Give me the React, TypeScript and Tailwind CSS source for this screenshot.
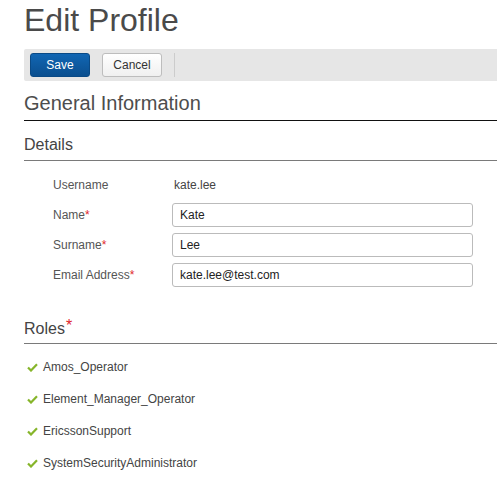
import React from 'react';

const font = { fontFamily: '"Liberation Sans", Arial, sans-serif' };

const Req = () => <span className="text-[#e0282d]">*</span>;

const CheckIcon = () => (
  <svg width="11" height="9" viewBox="0 0 11 9" className="shrink-0">
    <path d="M1 4.5 L4 7.5 L10 1.2" fill="none" stroke="#86b52a" strokeWidth="2.2" />
  </svg>
);

const fields = [
  { label: 'Name', value: 'Kate' },
  { label: 'Surname', value: 'Lee' },
  { label: 'Email Address', value: 'kate.lee@test.com' },
];

const roles = [
  'Amos_Operator',
  'Element_Manager_Operator',
  'EricssonSupport',
  'SystemSecurityAdministrator',
];

export default function App() {
  return (
    <div className="w-[497px] h-[487px] bg-white overflow-hidden pl-[24px]" style={font}>
      <h1 className="pt-[4px] text-[32px] leading-[32px] text-[#4a4a4a]">Edit Profile</h1>

      {/* toolbar */}
      <div className="mt-[13px] h-[32px] bg-[#e6e6e6] rounded-l-[2px] flex items-center px-[6px] gap-[12px]">
        <button className="w-[60px] h-[24px] rounded-[3px] border border-[#0a4a86] bg-gradient-to-b from-[#1166b3] to-[#0b4f8f] text-white text-[12px]">
          Save
        </button>
        <button className="w-[60px] h-[24px] rounded-[3px] border border-[#bdbdbd] bg-gradient-to-b from-white to-[#f0f0f0] text-[#333] text-[12px]">
          Cancel
        </button>
        <div className="w-px h-[24px] bg-[#cccccc]" />
      </div>

      <h2 className="mt-[12px] pb-[7px] border-b border-[#111] text-[20px] leading-[20px] text-[#4d4d4d]">
        General Information
      </h2>

      <h3 className="mt-[16px] pb-[7px] border-b border-[#7a7a7a] text-[16px] leading-[16px] text-[#444]">
        Details
      </h3>

      <div className="mt-[12px] pl-[29px] flex flex-col gap-[6px] text-[12px]">
        <div className="flex items-center h-[24px]">
          <div className="w-[120px] text-[#555]">Username</div>
          <div className="pl-[1px] text-[#444]">kate.lee</div>
        </div>
        {fields.map((f) => (
          <div key={f.label} className="flex items-center h-[24px]">
            <div className="w-[119px] text-[#555]">
              {f.label}
              <Req />
            </div>
            <input
              readOnly
              value={f.value}
              className="w-[301px] h-[24px] rounded-[3px] border border-[#bbbbbb] px-[7px] text-[12px] text-[#222] outline-none"
              style={font}
            />
          </div>
        ))}
      </div>

      <h3 className="mt-[34px] pb-[6px] border-b border-[#7a7a7a] text-[16px] leading-[16px] text-[#444]">
        Roles
        <span className="relative -top-[3px] ml-[1px] text-[#e0282d]">*</span>
      </h3>

      <ul className="mt-[7px] pl-[3px] text-[12px] text-[#444]">
        {roles.map((r) => (
          <li key={r} className="h-[32px] flex items-center gap-[5px]">
            <CheckIcon />
            <span>{r}</span>
          </li>
        ))}
      </ul>
    </div>
  );
}
